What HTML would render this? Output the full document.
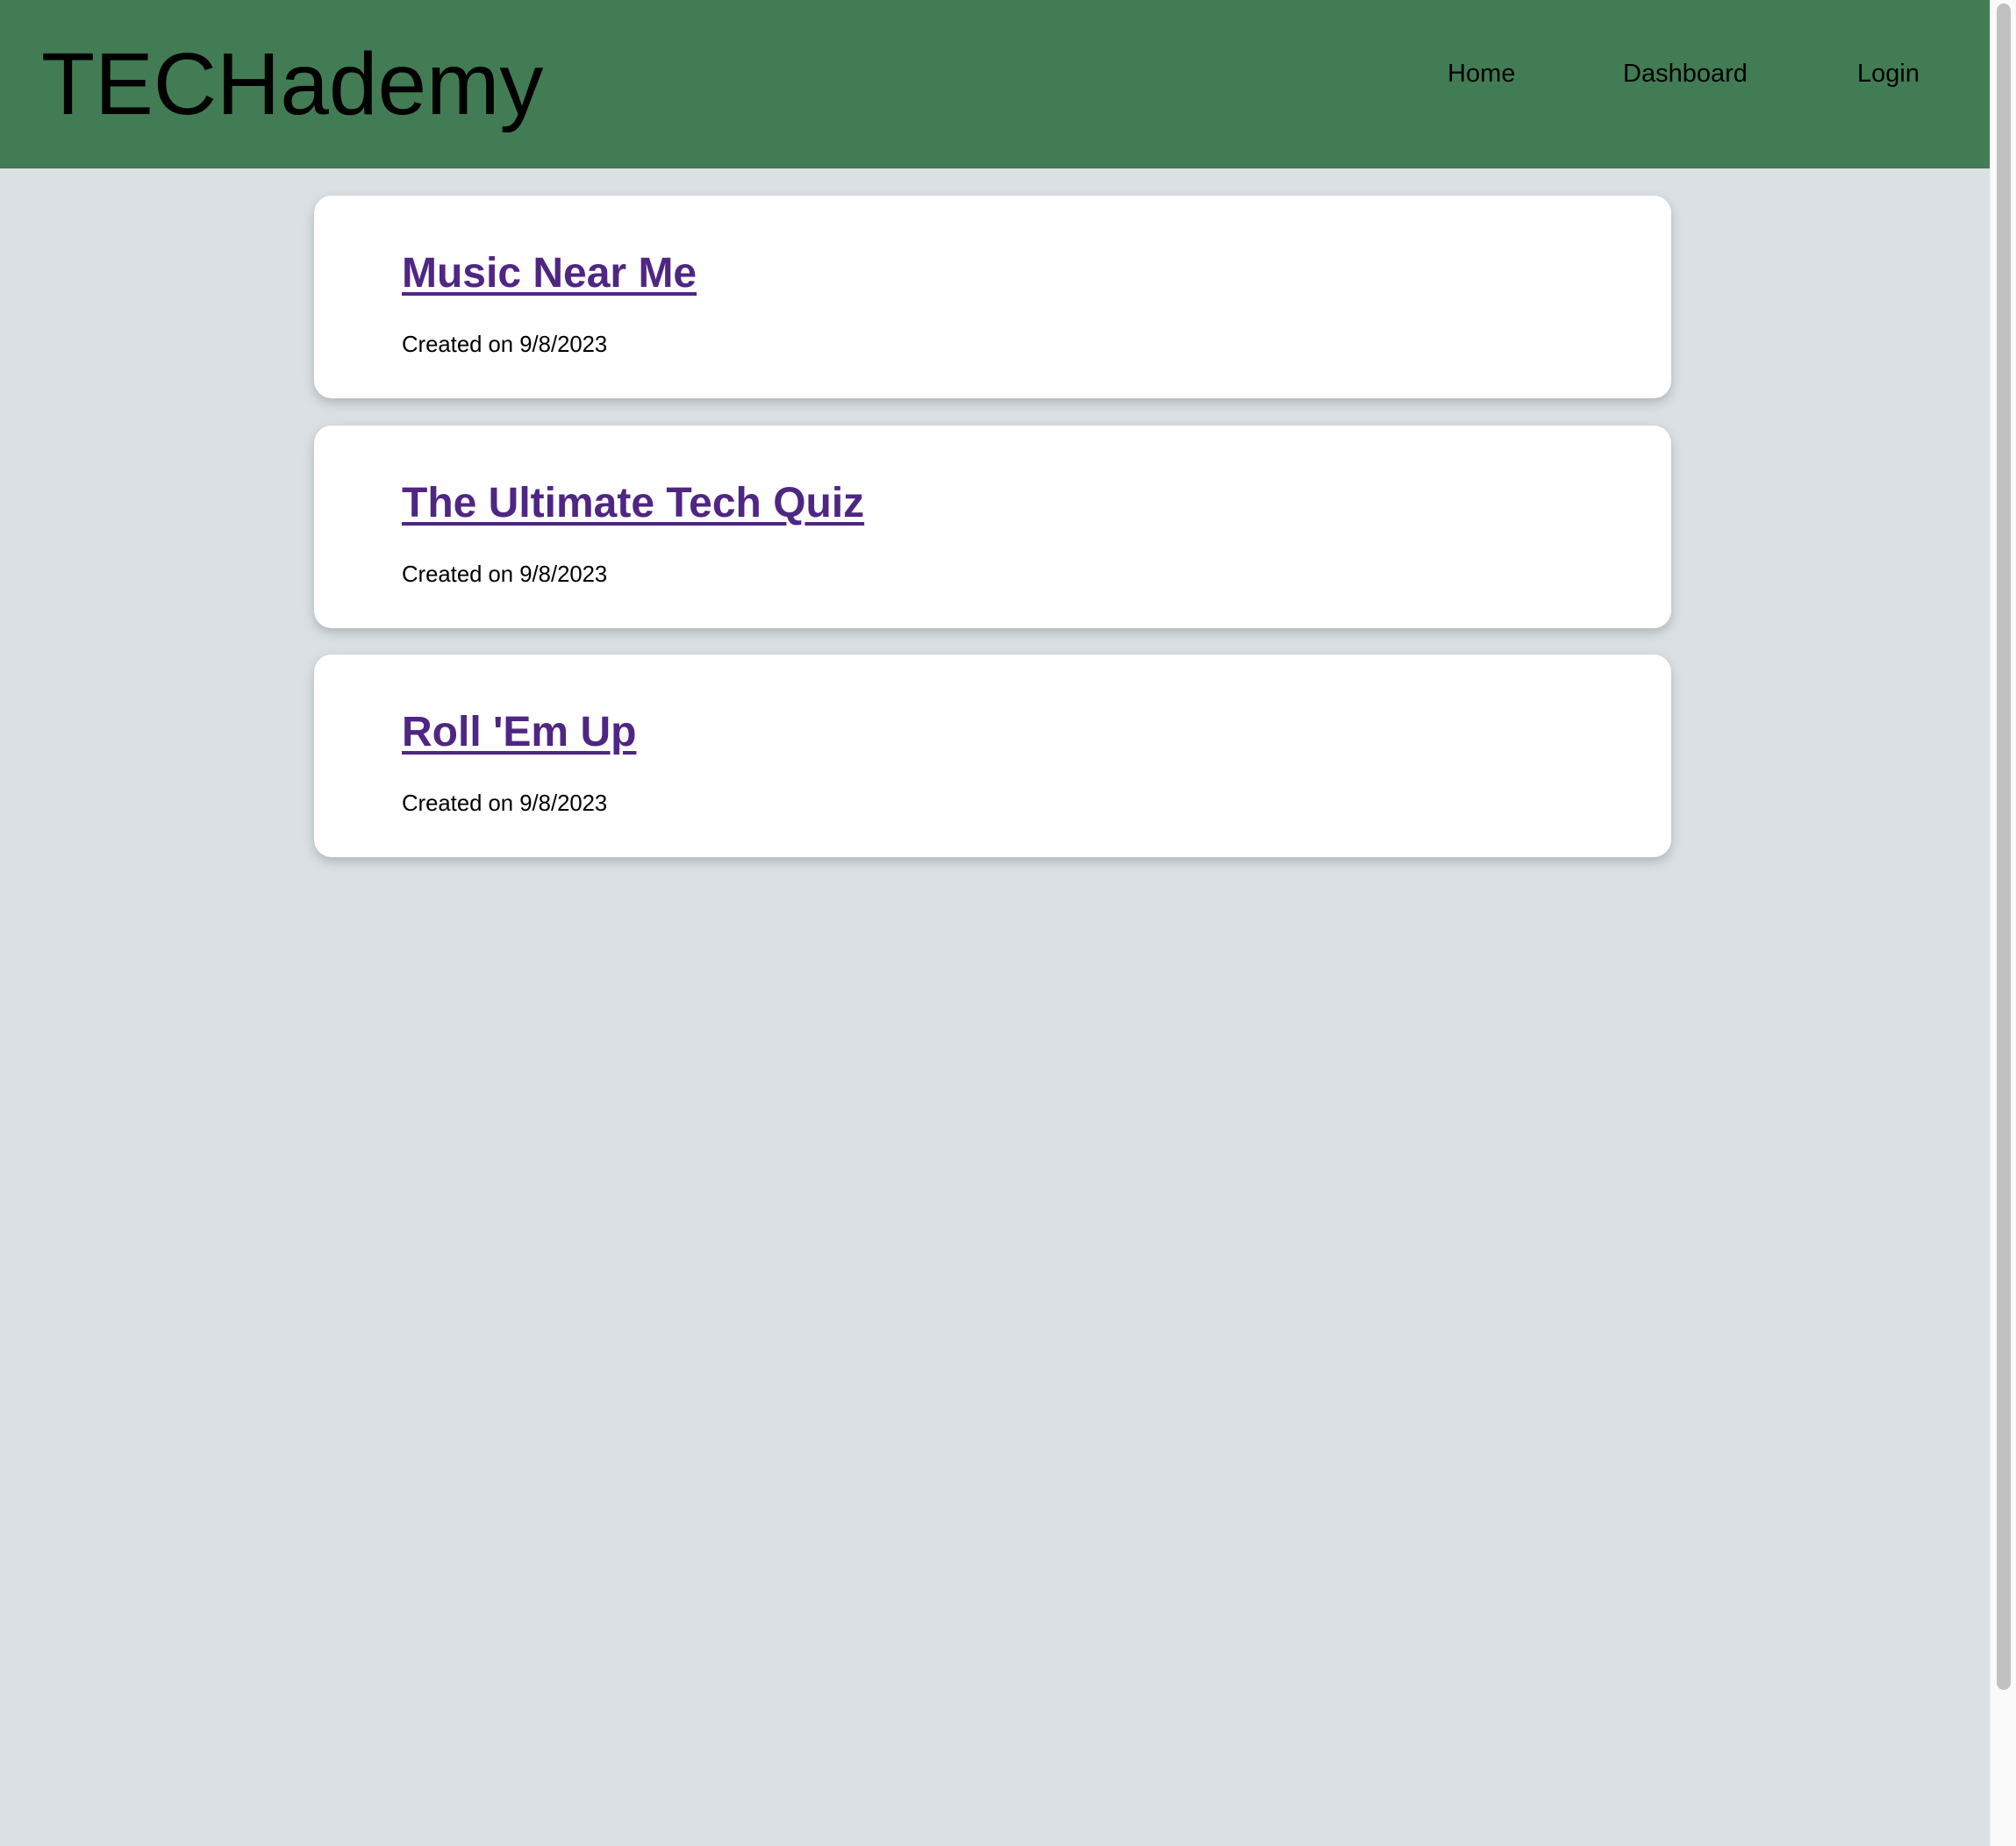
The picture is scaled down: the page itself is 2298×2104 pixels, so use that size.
<!DOCTYPE html>
<html><head><meta charset="utf-8"><style>
html,body{margin:0;padding:0;}
body{width:2298px;height:2104px;background:#dbe0e4;position:relative;overflow:hidden;font-family:"Liberation Sans",Arial,sans-serif;}
header{position:absolute;left:0;top:0;width:2268px;height:192px;background:#427c54;}
.logo{position:absolute;left:47px;top:36px;font-size:100px;line-height:120px;color:#000;white-space:nowrap;}
.nav{position:absolute;top:62px;font-size:29px;line-height:44px;color:#000;}
.card{position:absolute;left:358px;width:1547px;height:231px;background:#fff;border-radius:20px;box-shadow:0 5px 12px rgba(120,130,140,0.45);}
.t{position:absolute;left:100px;top:61px;font-size:48px;line-height:56px;font-weight:bold;color:#4f2683;text-decoration:underline;text-decoration-thickness:4px;text-underline-offset:6px;white-space:nowrap;}
.d{position:absolute;left:100px;top:155px;font-size:25.7px;line-height:30px;color:#000;white-space:nowrap;}
.track{position:absolute;left:2268px;top:0;width:30px;height:2104px;background:#fafafa;border-left:1px solid #ececec;box-sizing:border-box;}
.thumb{position:absolute;left:2276px;top:4px;width:16px;height:1922px;background:#c1c1c1;border-radius:8px;}
</style></head><body>
<header>
<div class="logo">TECHademy</div>
<div class="nav" style="left:1650px">Home</div>
<div class="nav" style="left:1850px">Dashboard</div>
<div class="nav" style="left:2117px">Login</div>
</header>
<div class="card" style="top:223px"><a class="t">Music Near Me</a><div class="d">Created on 9/8/2023</div></div>
<div class="card" style="top:485px"><a class="t">The Ultimate Tech Quiz</a><div class="d">Created on 9/8/2023</div></div>
<div class="card" style="top:746px"><a class="t">Roll 'Em Up</a><div class="d">Created on 9/8/2023</div></div>
<div class="track"></div>
<div class="thumb"></div>
</body></html>
